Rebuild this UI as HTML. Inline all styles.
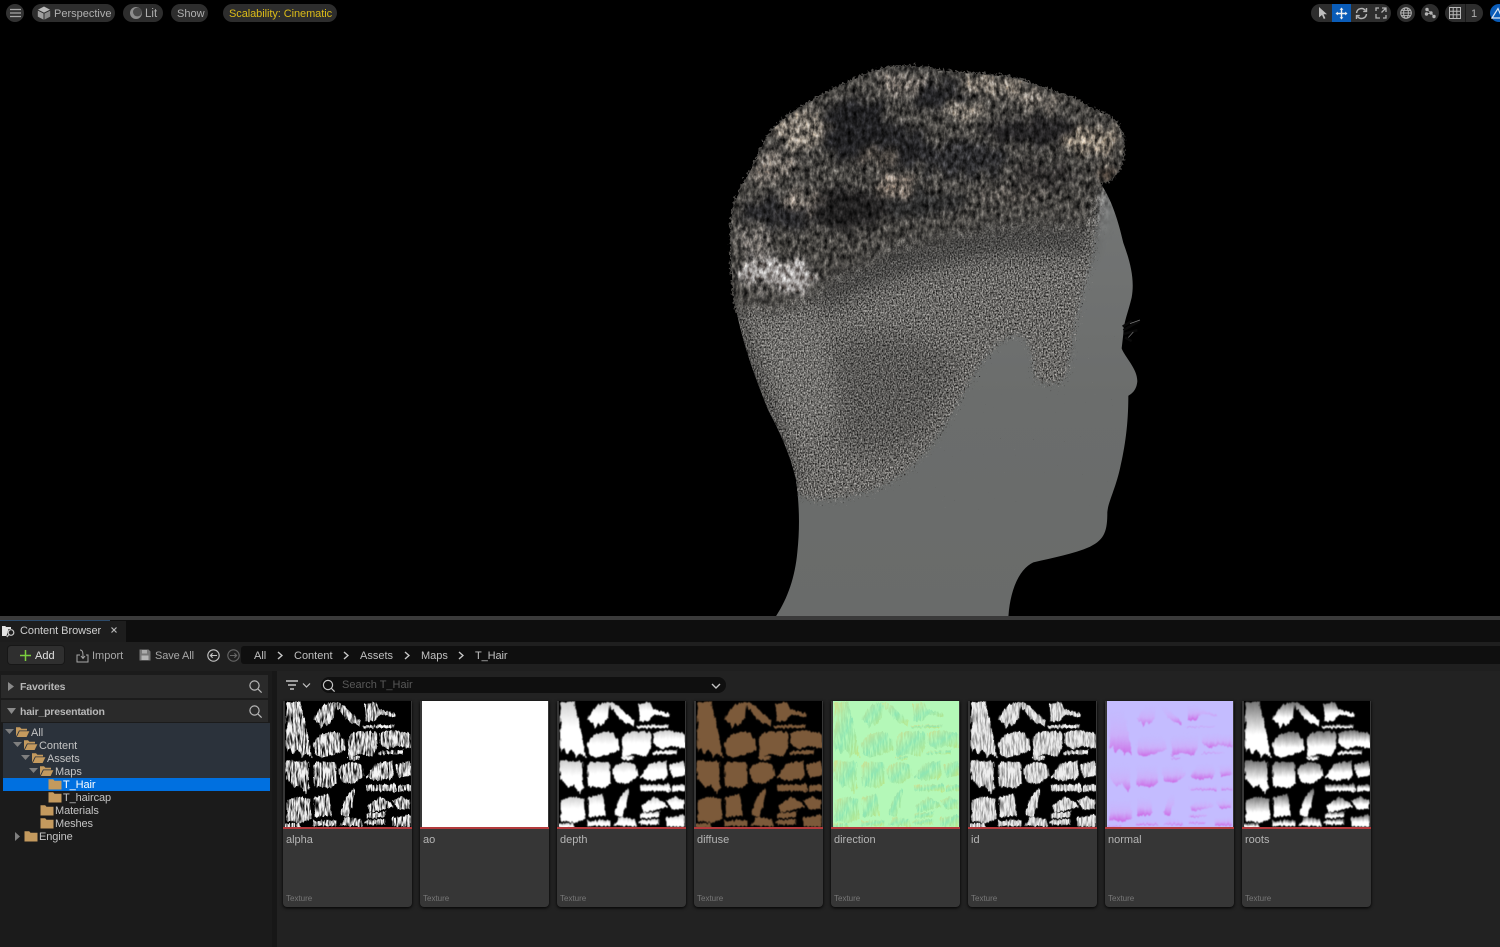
<!DOCTYPE html>
<html><head><meta charset="utf-8"><title>Content Browser</title>
<style>
html,body{margin:0;padding:0;background:#000}
#p{position:relative;width:1500px;height:947px;overflow:hidden;background:#000;font-family:"Liberation Sans",sans-serif;font-size:12px;color:#c8c8c8;filter:blur(.3px)}
#p div,#p span,#p svg.a{position:absolute}
.t{white-space:nowrap;line-height:14px}
.pill{background:#2d2d2d;border-radius:9px;height:18px;top:4px}
.card{top:701px;width:129px;height:206px;background:#363636;border-radius:0 0 4px 4px;box-shadow:0 1px 3px #000}
.card svg{position:absolute;left:2px;top:0;width:126px;height:126px;display:block}
.card i{position:absolute;left:0;right:0;top:126px;height:2px;background:#b33a3c}
.card b{position:absolute;left:3px;top:132px;font-weight:normal;font-size:11px;line-height:14px;color:#b4b4b4}
.card em{position:absolute;left:3px;top:192px;font-style:normal;font-size:8px;line-height:12px;color:#777}
.tr{font-size:11px;color:#c4c4c4}
.bc{top:649px;font-size:11px;line-height:14px;color:#c0c0c0;white-space:nowrap}
</style></head><body><div id="p">

<svg width="0" height="0" style="position:absolute">
<defs>
<filter id="grain" x="-5%" y="-5%" width="110%" height="110%" color-interpolation-filters="sRGB">
<feGaussianBlur in="SourceAlpha" stdDeviation="20" result="m"/>
<feTurbulence type="fractalNoise" baseFrequency="0.24 0.2" numOctaves="2" seed="4" result="t"/>
<feColorMatrix in="t" type="matrix" values="1.15 0 0 0 -.16  1.14 0 0 0 -.16  1.12 0 0 0 -.16  0 0 0 0 1" result="n"/>
<feColorMatrix in="t" type="matrix" values="0 0 0 0 0  0 0 0 0 0  0 0 0 0 0  0 1 0 0 0" result="na"/>
<feComposite in="m" in2="na" operator="arithmetic" k1="0" k2="1.4" k3="1.7" k4="-1.4" result="th"/>
<feComponentTransfer in="th" result="th2"><feFuncA type="linear" slope="4"/></feComponentTransfer>
<feComposite in="n" in2="th2" operator="in"/>
</filter>
<filter id="fur" x="-8%" y="-8%" width="116%" height="116%" color-interpolation-filters="sRGB">
<feTurbulence type="fractalNoise" baseFrequency="0.12 0.04" numOctaves="3" seed="11" result="t"/>
<feDisplacementMap in="SourceGraphic" in2="t" scale="110" xChannelSelector="R" yChannelSelector="G" result="d"/>
<feGaussianBlur in="d" stdDeviation="16"/>
</filter>
<filter id="blot" x="-8%" y="-8%" width="116%" height="116%" color-interpolation-filters="sRGB">
<feTurbulence type="fractalNoise" baseFrequency="0.03" numOctaves="3" seed="6" result="t"/>
<feDisplacementMap in="SourceGraphic" in2="t" scale="90" xChannelSelector="R" yChannelSelector="G" result="d"/>
<feGaussianBlur in="d" stdDeviation="9"/>
</filter>
<filter id="fuzz" x="-5%" y="-10%" width="110%" height="120%" color-interpolation-filters="sRGB">
<feTurbulence type="fractalNoise" baseFrequency="0.12" numOctaves="2" seed="2" result="t"/>
<feDisplacementMap in="SourceGraphic" in2="t" scale="26" xChannelSelector="R" yChannelSelector="G"/>
</filter>
<filter id="soft"><feGaussianBlur stdDeviation="26"/></filter>
<filter id="tex1" x="0" y="0" width="100%" height="100%" color-interpolation-filters="sRGB">
<feTurbulence type="fractalNoise" baseFrequency="0.07 0.05" numOctaves="3" seed="8"/>
<feColorMatrix type="matrix" values="1.25 0 0 0 -.125  1.25 0 0 0 -.125  1.25 0 0 0 -.125  0 0 0 0 1"/>
</filter>
<filter id="tex2" x="0" y="0" width="100%" height="100%" color-interpolation-filters="sRGB">
<feTurbulence type="fractalNoise" baseFrequency="0.14 0.07" numOctaves="2" seed="19"/>
<feColorMatrix type="matrix" values="1.2 0 0 0 -.1  1.2 0 0 0 -.1  1.2 0 0 0 -.1  0 0 0 0 1"/>
</filter>
<filter id="hairy" x="-6%" y="-6%" width="112%" height="112%" color-interpolation-filters="sRGB">
<feTurbulence type="fractalNoise" baseFrequency="0.16 0.035" numOctaves="2" seed="7" result="t"/>
<feDisplacementMap in="SourceGraphic" in2="t" scale="13" xChannelSelector="R" yChannelSelector="G" result="d"/>
<feGaussianBlur in="d" stdDeviation="1.5"/>
</filter>
<filter id="streak2" x="-6%" y="-6%" width="112%" height="112%" color-interpolation-filters="sRGB">
<feTurbulence type="fractalNoise" baseFrequency="0.16 0.035" numOctaves="2" seed="7" result="t"/>
<feDisplacementMap in="SourceGraphic" in2="t" scale="13" xChannelSelector="R" yChannelSelector="G" result="d"/>
<feTurbulence type="fractalNoise" baseFrequency="0.2 0.03" numOctaves="3" seed="5"/>
<feColorMatrix type="matrix" values="0 0 0 0 0  0 0 0 0 0  0 0 0 0 0  3 0 0 0 -.75" result="n"/>
<feComposite in="d" in2="n" operator="in"/>
<feGaussianBlur stdDeviation="1.2"/>
</filter>
<linearGradient id="gDepth" x1="0" y1="0" x2="0" y2="1"><stop offset="0" stop-color="#d0d0d0"/><stop offset=".45" stop-color="#fff"/></linearGradient>
<linearGradient id="gRoots" x1="0" y1="0" x2="0" y2="1"><stop offset="0" stop-color="#777"/><stop offset=".6" stop-color="#fff"/></linearGradient>
<linearGradient id="gNorm" x1="0" y1="0" x2="0" y2="1"><stop offset="0" stop-color="#c4bcff" stop-opacity="0"/><stop offset=".6" stop-color="#d4a0f4" stop-opacity=".6"/><stop offset="1" stop-color="#d040d8"/></linearGradient>
<linearGradient id="gDir" x1="0" y1="0" x2="1" y2="1"><stop offset="0" stop-color="#e8d070"/><stop offset=".5" stop-color="#70d8b0"/><stop offset="1" stop-color="#c8d860"/></linearGradient>
<linearGradient id="skin" x1="0" y1="0" x2="0" y2="1"><stop offset="0" stop-color="#787a7a"/><stop offset=".6" stop-color="#6b6d6c"/><stop offset="1" stop-color="#696b6a"/></linearGradient>
<g id="blobs">
<path d="M8,8 L44,5 L58,70 L78,165 L62,150 L52,165 L40,142 L25,156 L17,135 L8,148Z"/>
<path d="M90,55 C100,30 118,8 148,6 L145,48 L130,72 L120,62 L108,78 L98,60Z"/>
<path d="M152,8 L166,10 L226,62 L224,74 L186,52Z"/>
<path d="M244,12 L272,6 L282,27 L330,40 L328,44 L284,38 L270,58 L244,58Z"/>
<path d="M238,76 L328,74 L326,78 L240,79Z"/>
<path d="M90,128 C100,105 125,92 160,98 C172,110 180,130 180,146 L150,158 L110,168 L92,155Z"/>
<path d="M192,108 C215,92 250,92 274,98 L276,135 L262,164 L225,156 L197,166Z"/>
<path d="M285,98 C310,90 355,90 376,102 L378,140 L340,132 L310,142 L288,128Z"/>
<path d="M288,154 L352,150 L348,156 L288,158Z"/>
<path d="M192,170 L222,168 L222,174 L194,174Z"/>
<path d="M6,182 L68,186 L72,262 L62,276 L45,248 L30,258 L8,232Z"/>
<path d="M88,194 C105,182 140,182 152,194 L152,248 L134,260 L92,254Z"/>
<path d="M165,205 C175,188 210,180 230,198 L235,225 L205,248 L172,242Z"/>
<path d="M250,228 L272,194 L322,184 L322,232 L275,236Z"/>
<path d="M336,194 L375,184 L376,222 L346,228Z"/>
<path d="M248,256 L332,254 L332,270 L248,268Z"/>
<path d="M344,258 L376,254 L376,268 L344,270Z"/>
<path d="M8,304 L40,290 L72,298 L75,352 L50,364 L8,360Z"/>
<path d="M90,294 L128,284 L136,320 L135,344 L92,346Z"/>
<path d="M172,342 L180,302 L204,268 L205,296 L188,348Z"/>
<path d="M250,318 L285,292 L318,306 L322,318 L256,334Z"/>
<path d="M328,302 L352,290 L375,302 L375,322 L342,326Z"/>
<path d="M248,342 L302,336 L300,348 L252,352Z"/>
<path d="M244,364 L298,360 L298,370 L248,370Z"/>
<path d="M326,354 L375,346 L375,376 L328,376Z"/>
<path d="M88,364 L152,362 L152,374 L88,374Z"/>
<path d="M170,372 L182,354 L226,358 L230,376Z"/>
<path d="M0,372 L42,372 L42,380 L0,380Z"/>
</g>
<path id="fo" d="M1,11.5V2.2h4l1.4,1.6H12V5.5H4L1,11.5ZM4.6,6.2H14.4L11.6,12H1.8Z"/>
<path id="fc" d="M.5,2.2h4.7l1.3,1.5h7v8.8H.5Z"/>
</defs>
</svg>

<!-- viewport -->
<svg class="a" style="left:0;top:0" width="1500" height="616" viewBox="0 0 1500 616">
<defs>
<clipPath id="head"><path d="M225,1560 C262,1510 285,1450 292,1380 C300,1310 298,1250 288,1180 C270,1110 240,1050 205,990 C165,900 130,810 110,720 C95,650 90,560 95,470 C100,410 130,370 170,300 C195,240 225,200 300,160 C360,125 420,100 500,65 C560,45 620,40 680,50 C770,70 880,60 970,85 C1050,115 1120,125 1190,170 C1240,180 1275,210 1270,280 C1265,330 1240,365 1200,365 C1235,410 1255,470 1270,530 C1290,580 1305,630 1295,680 C1285,720 1270,750 1270,780 L1265,820 C1275,845 1312,875 1312,910 C1310,935 1295,945 1285,950 C1285,1030 1275,1090 1260,1150 C1245,1210 1225,1240 1222,1270 C1222,1320 1215,1345 1170,1365 C1120,1385 1060,1395 1000,1408 C960,1425 930,1480 925,1560Z"/></clipPath>
<mask id="furmask" maskUnits="userSpaceOnUse" x="0" y="0" width="1400" height="800"><path fill="#fff" filter="url(#soft)" d="M0,0 L1400,0 L1340,360 L1210,400 L1180,490 C1000,470 840,490 700,525 C560,550 450,600 360,660 C320,715 200,705 120,705 L0,715Z"/></mask>
</defs>
<g transform="translate(700,50) scale(.33333,.3639)">
<path fill="url(#skin)" d="M225,1560 C262,1510 285,1450 292,1380 C300,1310 298,1250 288,1180 C270,1110 240,1050 205,990 C165,900 130,810 110,720 C95,650 90,560 95,470 C100,410 130,370 170,300 C195,240 225,200 300,160 C360,125 420,100 500,65 C560,45 620,40 680,50 C770,70 880,60 970,85 C1050,115 1120,125 1190,170 C1240,180 1275,210 1270,280 C1265,330 1240,365 1200,365 C1235,410 1255,470 1270,530 C1290,580 1305,630 1295,680 C1285,720 1270,750 1270,780 L1265,820 C1275,845 1312,875 1312,910 C1310,935 1295,945 1285,950 C1285,1030 1275,1090 1260,1150 C1245,1210 1225,1240 1222,1270 C1222,1320 1215,1345 1170,1365 C1120,1385 1060,1395 1000,1408 C960,1425 930,1480 925,1560Z"/>
<!-- fuzzy hair edge -->
<path fill="none" stroke="#4c4a47" stroke-width="7" filter="url(#fuzz)" d="M110,720 C95,650 90,560 95,470 C100,410 130,370 170,300 C195,240 225,200 300,160 C360,125 420,100 500,65 C560,45 620,40 680,50 C770,70 880,60 970,85 C1050,115 1120,125 1190,170 C1240,180 1275,210 1270,280 C1265,330 1240,365 1200,365"/>
<g clip-path="url(#head)">
<!-- short hair -->
<path filter="url(#grain)" d="M40,440 L1190,340 C1195,480 1180,570 1150,650 C1125,730 1110,830 1095,915 L1005,915 C1000,860 1005,810 960,775 C900,790 860,830 810,905 C770,975 735,1040 650,1130 C570,1200 470,1235 340,1235 L260,1210 L40,800Z"/>
<path fill="#161616" opacity=".18" filter="url(#soft)" d="M400,800 C520,760 680,780 780,860 L680,1050 C600,1120 500,1130 420,1090Z"/>
<path fill="#a8a8a4" opacity=".1" filter="url(#soft)" d="M150,760 L350,740 L430,1000 L300,1090Z"/>
<path fill="#111" opacity=".4" filter="url(#soft)" d="M60,640 L110,720 L300,1200 L250,1200 L60,900Z"/>
<!-- transition shadow below the fur -->
<path fill="#1c1b1b" opacity=".45" filter="url(#soft)" d="M350,650 C460,590 570,540 710,510 C850,480 1000,470 1170,490 L1160,560 C1000,550 850,560 720,590 C580,620 470,660 370,720Z"/>
<!-- fur base -->
<path fill="#454340" filter="url(#fur)" d="M60,30 L1300,30 L1290,360 L1190,395 L1165,490 C1000,470 840,490 700,525 C560,550 450,600 360,660 C320,715 200,705 120,705 L60,715Z"/>
<!-- blotches -->
<g filter="url(#blot)">
<ellipse cx="470" cy="220" rx="100" ry="90" fill="#1f1f21"/>
<ellipse cx="610" cy="270" rx="100" ry="50" fill="#232325"/>
<ellipse cx="430" cy="440" rx="150" ry="52" fill="#201f1f"/>
<ellipse cx="660" cy="420" rx="120" ry="34" fill="#2d2d2d"/>
<ellipse cx="230" cy="450" rx="110" ry="34" fill="#262628"/>
<ellipse cx="720" cy="120" rx="80" ry="26" fill="#232325"/>
<ellipse cx="1010" cy="225" rx="150" ry="35" fill="#232223"/>
<ellipse cx="800" cy="300" rx="130" ry="45" fill="#2c2c2e"/>
<ellipse cx="1040" cy="345" rx="100" ry="28" fill="#302e2d"/>
<ellipse cx="300" cy="220" rx="75" ry="55" fill="#7c756c"/>
<ellipse cx="210" cy="320" rx="80" ry="40" fill="#6e6862"/>
<ellipse cx="300" cy="420" rx="60" ry="22" fill="#7c746c"/>
<ellipse cx="190" cy="610" rx="85" ry="38" fill="#9c9896"/>
<ellipse cx="280" cy="630" rx="65" ry="38" fill="#a09c9a"/>
<ellipse cx="160" cy="530" rx="50" ry="40" fill="#6e6a66"/>
<ellipse cx="880" cy="95" rx="90" ry="22" fill="#847c72"/>
<ellipse cx="790" cy="170" rx="65" ry="22" fill="#7e776e"/>
<ellipse cx="610" cy="95" rx="75" ry="24" fill="#706a64"/>
<ellipse cx="1180" cy="250" rx="85" ry="40" fill="#7e7569"/>
<ellipse cx="1010" cy="140" rx="80" ry="20" fill="#716b64"/>
<ellipse cx="590" cy="380" rx="50" ry="30" fill="#776d64"/>
<ellipse cx="530" cy="290" rx="70" ry="20" fill="#4a4540"/>
<ellipse cx="940" cy="400" rx="90" ry="20" fill="#504c48"/>
<ellipse cx="1230" cy="335" rx="35" ry="22" fill="#3c332c"/>
</g>
<g mask="url(#furmask)" style="mix-blend-mode:overlay">
<rect x="60" y="20" width="1260" height="740" filter="url(#tex1)"/>
</g>
<g mask="url(#furmask)" style="mix-blend-mode:overlay" opacity=".5">
<rect x="60" y="20" width="1260" height="740" filter="url(#tex2)"/>
</g>
</g>
<!-- eyelashes -->
<path d="M1270,770 L1318,745 M1272,780 L1312,770 M1275,790 L1295,800 M1268,760 L1295,745" stroke="#0a0a0a" stroke-width="7" fill="none"/>
<path d="M1290,752 L1320,742 M1285,790 L1300,775" stroke="#7a7a7a" stroke-width="2" fill="none"/>
</g>
</svg>

<!-- top left toolbar -->
<div style="left:6px;top:4px;width:18px;height:18px;border-radius:9px;background:#333"></div>
<svg class="a" style="left:10px;top:8px" width="11" height="10"><path d="M0,1.5H11M0,5H11M0,8.5H11" stroke="#a8a8a8" stroke-width="1.3"/></svg>
<div class="pill" style="left:32px;width:83px"></div>
<svg class="a" style="left:37px;top:6px" width="14" height="14" viewBox="0 0 14 14"><path d="M7,.5L13,3.6L7,6.6L1,3.6Z" fill="#b8b8b8"/><path d="M.8,4.6L6.5,7.5V13.6L.8,10.6Z" fill="#a0a0a0"/><path d="M13.2,4.6L7.5,7.5V13.6L13.2,10.6Z" fill="#8a8a8a"/></svg>
<span class="t" style="left:54px;top:7px;color:#b0b0b0;font-size:11px">Perspective</span>
<div class="pill" style="left:123px;width:40px"></div>
<svg class="a" style="left:129px;top:6px" width="14" height="14"><circle cx="7" cy="7" r="6" fill="#8d8d8d"/><circle cx="8.4" cy="6" r="4.4" fill="#4a4a4a"/></svg>
<span class="t" style="left:145px;top:7px;color:#b0b0b0;font-size:11.5px">Lit</span>
<div class="pill" style="left:171px;width:37px"></div>
<span class="t" style="left:177px;top:7px;color:#b0b0b0;font-size:11px">Show</span>
<div class="pill" style="left:223px;width:114px"></div>
<span class="t" style="left:229px;top:7px;color:#dcbc18;font-size:11px;letter-spacing:-.07px">Scalability: Cinematic</span>

<!-- top right toolbar -->
<div class="pill" style="left:1311px;width:80px;border-radius:9px"></div>
<div style="left:1332px;top:4px;width:19px;height:18px;background:#0a5cb8"></div>
<svg class="a" style="left:1316px;top:6px" width="13" height="14" viewBox="0 0 13 14"><path d="M3,1L11,8.2H7.6L9.4,12.2L7.8,13L6,9L3,11.4Z" fill="#bdbdbd"/></svg>
<svg class="a" style="left:1335px;top:7px" width="13" height="13" viewBox="0 0 13 13"><path d="M6.5,.5L8.4,2.8H7.2V5.8H10.2V4.6L12.5,6.5L10.2,8.4V7.2H7.2V10.2H8.4L6.5,12.5L4.6,10.2H5.8V7.2H2.8V8.4L.5,6.5L2.8,4.6V5.8H5.8V2.8H4.6Z" fill="#f0f0f0"/></svg>
<svg class="a" style="left:1355px;top:7px" width="13" height="13" viewBox="0 0 13 13" fill="none" stroke="#b4b4b4" stroke-width="1.4"><path d="M1.5,6A5,5 0 0 1 10.5,3.6"/><path d="M11.5,7A5,5 0 0 1 2.5,9.4"/><path d="M11.5,1V4.4H8.2" /><path d="M1.5,12V8.6H4.8"/></svg>
<svg class="a" style="left:1375px;top:7px" width="12" height="12" viewBox="0 0 12 12" fill="none" stroke="#b4b4b4" stroke-width="1.3"><path d="M7,1H11V5M6.5,5.5L11,1"/><path d="M1,7V11H5"/><path d="M1,4V1H4"/><path d="M11,8V11H8"/></svg>
<div style="left:1397px;top:4px;width:18px;height:18px;border-radius:9px;background:#2d2d2d"></div>
<svg class="a" style="left:1400px;top:7px" width="12" height="12" viewBox="0 0 12 12" fill="none" stroke="#b4b4b4" stroke-width="1"><circle cx="6" cy="6" r="5.3"/><ellipse cx="6" cy="6" rx="2.4" ry="5.3"/><path d="M.7,6H11.3M1.5,3.4H10.5M1.5,8.6H10.5"/></svg>
<div style="left:1421px;top:4px;width:18px;height:18px;border-radius:9px;background:#2d2d2d"></div>
<svg class="a" style="left:1424px;top:7px" width="12" height="12" viewBox="0 0 12 12" fill="#b4b4b4" stroke="#b4b4b4" stroke-width=".8"><circle cx="3" cy="2.5" r="1.3"/><circle cx="2.5" cy="7" r="1.3"/><circle cx="7" cy="6" r="1.3"/><circle cx="10" cy="9.5" r="1.3"/><path d="M3,2.5L7,6L2.5,7M7,6L10,9.5" fill="none"/></svg>
<div class="pill" style="left:1445px;width:38px"></div>
<div style="left:1465px;top:4px;width:1px;height:18px;background:#1a1a1a"></div>
<svg class="a" style="left:1449px;top:7px" width="12" height="12" viewBox="0 0 12 12" fill="none" stroke="#b8b8b8" stroke-width="1"><path d="M.5,.5H11.5V11.5H.5ZM4.2,.5V11.5M7.8,.5V11.5M.5,4.2H11.5M.5,7.8H11.5"/></svg>
<span class="t" style="left:1471px;top:7px;color:#b0b0b0;font-size:11px">1</span>
<div style="left:1490px;top:4px;width:20px;height:18px;border-radius:9px;background:#0a5cb8"></div>
<svg class="a" style="left:1491px;top:6px" width="9" height="14" viewBox="0 0 9 14" fill="none" stroke="#dfe8f5" stroke-width="1.2"><path d="M1,12L7,2.5L11,12Z"/></svg>

<!-- bottom panel -->
<div style="left:0;top:616px;width:1500px;height:4px;background:#3a3a3a"></div>
<div style="left:0;top:620px;width:1500px;height:22px;background:#0e0e0e"></div>
<div style="left:0;top:621px;width:126px;height:21px;background:#1d1d1d"></div>
<div style="left:0;top:620px;width:110px;height:1px;background:#2c4a6a"></div>
<svg class="a" style="left:2px;top:624px" width="14" height="14" viewBox="0 0 14 14"><path d="M0,2H3.2L4.2,3H9V5H6.5L4.5,12H0Z" fill="#e4e4e4"/><circle cx="9" cy="8.5" r="2.8" fill="none" stroke="#c8c8c8" stroke-width="1.2"/><path d="M7,10.5L4.8,13" stroke="#c8c8c8" stroke-width="1.3"/></svg>
<span class="t" style="left:20px;top:624px;font-size:11px;color:#cfcfcf;letter-spacing:-.05px">Content Browser</span>
<svg class="a" style="left:110px;top:626px" width="8" height="8"><path d="M1.5,1.5L6.5,6.5M6.5,1.5L1.5,6.5" stroke="#b8b8b8" stroke-width="1.2"/></svg>

<div style="left:0;top:642px;width:1500px;height:29px;background:#1f1f1f"></div>
<div style="left:8px;top:646px;width:56px;height:18px;background:#2f2f2f;border-radius:3px;box-shadow:0 0 0 1px #171717"></div>
<svg class="a" style="left:20px;top:650px" width="11" height="11"><path d="M5.5,0V11M0,5.5H11" stroke="#7bcf3f" stroke-width="1.5"/></svg>
<span class="t" style="left:35px;top:649px;font-size:11px;color:#e0e0e0">Add</span>
<svg class="a" style="left:76px;top:649px" width="14" height="14" viewBox="0 0 14 14" fill="none" stroke="#a8a8a8" stroke-width="1"><path d="M4,6H1V13H12V6H10"/><path d="M4,1C7,1 7,4 7,9M5,7L7,9.5L9,7"/></svg>
<span class="t" style="left:92px;top:649px;font-size:11px;color:#a8a8a8">Import</span>
<svg class="a" style="left:139px;top:649px" width="12" height="12" viewBox="0 0 12 12"><path d="M.5,.5H9.5L11.5,2.5V11.5H.5Z" fill="#777"/><rect x="3" y="1" width="5" height="3.5" fill="#aaa"/><rect x="2.5" y="6.5" width="7" height="4.5" fill="#b5b5b5"/></svg>
<span class="t" style="left:155px;top:649px;font-size:11px;color:#a8a8a8;letter-spacing:-.1px">Save All</span>
<svg class="a" style="left:207px;top:649px" width="13" height="13" viewBox="0 0 13 13" fill="none" stroke="#c4c4c4" stroke-width="1.1"><circle cx="6.5" cy="6.5" r="5.7"/><path d="M10,6.5H3.4M5.6,4.3L3.4,6.5L5.6,8.7"/></svg>
<svg class="a" style="left:227px;top:649px" width="13" height="13" viewBox="0 0 13 13" fill="none" stroke="#666" stroke-width="1.1"><circle cx="6.5" cy="6.5" r="5.7"/><path d="M3,6.5H9.6M7.4,4.3L9.6,6.5L7.4,8.7"/></svg>
<div style="left:241px;top:646px;width:1259px;height:18px;background:#0f0f0f;border-radius:3px 0 0 3px"></div>
<span class="bc" style="left:254px">All</span>
<span class="bc" style="left:294px">Content</span>
<span class="bc" style="left:360px">Assets</span>
<span class="bc" style="left:421px">Maps</span>
<span class="bc" style="left:475px;letter-spacing:-.1px">T_Hair</span>
<svg class="a" style="left:277px;top:651px" width="6" height="9" fill="none" stroke="#c8c8c8" stroke-width="1.4"><path d="M1,1L5,4.5L1,8"/></svg>
<svg class="a" style="left:343px;top:651px" width="6" height="9" fill="none" stroke="#c8c8c8" stroke-width="1.4"><path d="M1,1L5,4.5L1,8"/></svg>
<svg class="a" style="left:404px;top:651px" width="6" height="9" fill="none" stroke="#c8c8c8" stroke-width="1.4"><path d="M1,1L5,4.5L1,8"/></svg>
<svg class="a" style="left:458px;top:651px" width="6" height="9" fill="none" stroke="#c8c8c8" stroke-width="1.4"><path d="M1,1L5,4.5L1,8"/></svg>

<!-- sidebar -->
<div style="left:0;top:671px;width:272px;height:276px;background:#1b1b1b"></div>
<div style="left:272px;top:671px;width:5px;height:276px;background:#171717"></div>
<div style="left:277px;top:671px;width:1223px;height:276px;background:#222"></div>
<div style="left:1px;top:675px;width:267px;height:23px;background:#2a2a2a"></div>
<div style="left:1px;top:700px;width:267px;height:22px;background:#2a2a2a"></div>
<svg class="a" style="left:8px;top:682px" width="6" height="9"><path d="M0,0L6,4.5L0,9Z" fill="#8a8a8a"/></svg>
<span class="t" style="left:20px;top:680px;font-size:10.5px;font-weight:bold;color:#b8b8b8;letter-spacing:-.15px">Favorites</span>
<svg class="a" style="left:249px;top:680px" width="13" height="13" fill="none" stroke="#b8b8b8" stroke-width="1.2"><circle cx="5.5" cy="5.5" r="4.6"/><path d="M8.8,8.8L12.6,12.6"/></svg>
<svg class="a" style="left:7px;top:708px" width="9" height="6"><path d="M0,0H9L4.5,6Z" fill="#8a8a8a"/></svg>
<span class="t" style="left:20px;top:705px;font-size:10.5px;font-weight:bold;color:#b8b8b8;letter-spacing:-.2px">hair_presentation</span>
<svg class="a" style="left:249px;top:705px" width="13" height="13" fill="none" stroke="#b8b8b8" stroke-width="1.2"><circle cx="5.5" cy="5.5" r="4.6"/><path d="M8.8,8.8L12.6,12.6"/></svg>

<div style="left:3px;top:723px;width:267px;height:55px;background:#2b323b"></div>
<div style="left:3px;top:778px;width:267px;height:13px;background:#0070e0"></div>

<svg class="a" style="left:0;top:720px" width="272" height="130">
<g fill="#7f7f7f">
<path d="M5,9H14L9.5,14Z"/><path d="M13,22H22L17.5,27Z"/><path d="M21,35H30L25.5,40Z"/><path d="M29,48H38L33.5,53Z"/>
<path d="M15,112L20,116.5L15,121Z"/>
</g>
<g fill="#c49a5e">
<use href="#fo" x="15" y="5"/><use href="#fo" x="23" y="18"/><use href="#fo" x="31" y="31"/><use href="#fo" x="39" y="44"/>
<use href="#fc" x="48" y="57"/><use href="#fc" x="48" y="70"/><use href="#fc" x="40" y="83"/><use href="#fc" x="40" y="96"/><use href="#fc" x="24" y="109"/>
</g>
</svg>
<span class="t tr" style="left:31px;top:726px">All</span>
<span class="t tr" style="left:39px;top:739px;letter-spacing:-.05px">Content</span>
<span class="t tr" style="left:47px;top:752px;letter-spacing:-.05px">Assets</span>
<span class="t tr" style="left:55px;top:765px">Maps</span>
<span class="t tr" style="left:63px;top:778px;color:#fff;letter-spacing:-.1px">T_Hair</span>
<span class="t tr" style="left:63px;top:791px;letter-spacing:-.1px">T_haircap</span>
<span class="t tr" style="left:55px;top:804px;letter-spacing:-.1px">Materials</span>
<span class="t tr" style="left:55px;top:817px;letter-spacing:-.1px">Meshes</span>
<span class="t tr" style="left:39px;top:830px;letter-spacing:-.1px">Engine</span>

<!-- filter & search -->
<svg class="a" style="left:286px;top:680px" width="26" height="11" fill="none"><path d="M0,1H12M2,5H10M4,9H8" stroke="#c4c4c4" stroke-width="1.4"/><path d="M17,3.5L20.5,7L24,3.5" stroke="#c4c4c4" stroke-width="1.2"/></svg>
<div style="left:321px;top:677px;width:405px;height:16px;background:#0f0f0f;border-radius:8px"></div>
<svg class="a" style="left:322px;top:679px" width="13" height="13" fill="none" stroke="#c4c4c4" stroke-width="1.2"><circle cx="6" cy="6" r="4.6"/><path d="M9.2,9.2L12.6,12.6"/></svg>
<span class="t" style="left:342px;top:678px;font-size:11px;color:#585858">Search T_Hair</span>
<svg class="a" style="left:711px;top:683px" width="10" height="6" fill="none"><path d="M1,1L5,5L9,1" stroke="#c4c4c4" stroke-width="1.4"/></svg>

<!-- cards -->
<div class="card" style="left:283px"><svg viewBox="0 0 380 380"><rect width="380" height="380" fill="#000"/><use href="#blobs" fill="#f4f4f4" stroke="#f4f4f4" stroke-width="6" filter="url(#streak2)"/></svg><i></i><b>alpha</b><em>Texture</em></div>
<div class="card" style="left:420px"><svg viewBox="0 0 380 380"><rect width="380" height="380" fill="#fff"/></svg><i></i><b>ao</b><em>Texture</em></div>
<div class="card" style="left:557px"><svg viewBox="0 0 380 380"><rect width="380" height="380" fill="#000"/><use href="#blobs" fill="url(#gDepth)" stroke="url(#gDepth)" stroke-width="6" filter="url(#hairy)"/></svg><i></i><b>depth</b><em>Texture</em></div>
<div class="card" style="left:694px"><svg viewBox="0 0 380 380"><rect width="380" height="380" fill="#000"/><use href="#blobs" fill="#7c5a3a" stroke="#7c5a3a" stroke-width="6" filter="url(#hairy)"/></svg><i></i><b>diffuse</b><em>Texture</em></div>
<div class="card" style="left:831px"><svg viewBox="0 0 380 380"><rect width="380" height="380" fill="#b4f8b8"/><use href="#blobs" fill="url(#gDir)" stroke="url(#gDir)" stroke-width="6" opacity=".55" filter="url(#streak2)"/></svg><i></i><b>direction</b><em>Texture</em></div>
<div class="card" style="left:968px"><svg viewBox="0 0 380 380"><rect width="380" height="380" fill="#000"/><use href="#blobs" fill="#8a8a8a" stroke="#8a8a8a" stroke-width="6" filter="url(#hairy)"/><use href="#blobs" fill="#eee" stroke="#eee" stroke-width="6" filter="url(#streak2)"/></svg><i></i><b>id</b><em>Texture</em></div>
<div class="card" style="left:1105px"><svg viewBox="0 0 380 380"><rect width="380" height="380" fill="#c4bcff"/><use href="#blobs" fill="url(#gNorm)" opacity=".7" filter="url(#hairy)"/></svg><i></i><b>normal</b><em>Texture</em></div>
<div class="card" style="left:1242px"><svg viewBox="0 0 380 380"><rect width="380" height="380" fill="#000"/><use href="#blobs" fill="url(#gRoots)" stroke="url(#gRoots)" stroke-width="6" filter="url(#hairy)"/></svg><i></i><b>roots</b><em>Texture</em></div>

</div></body></html>
